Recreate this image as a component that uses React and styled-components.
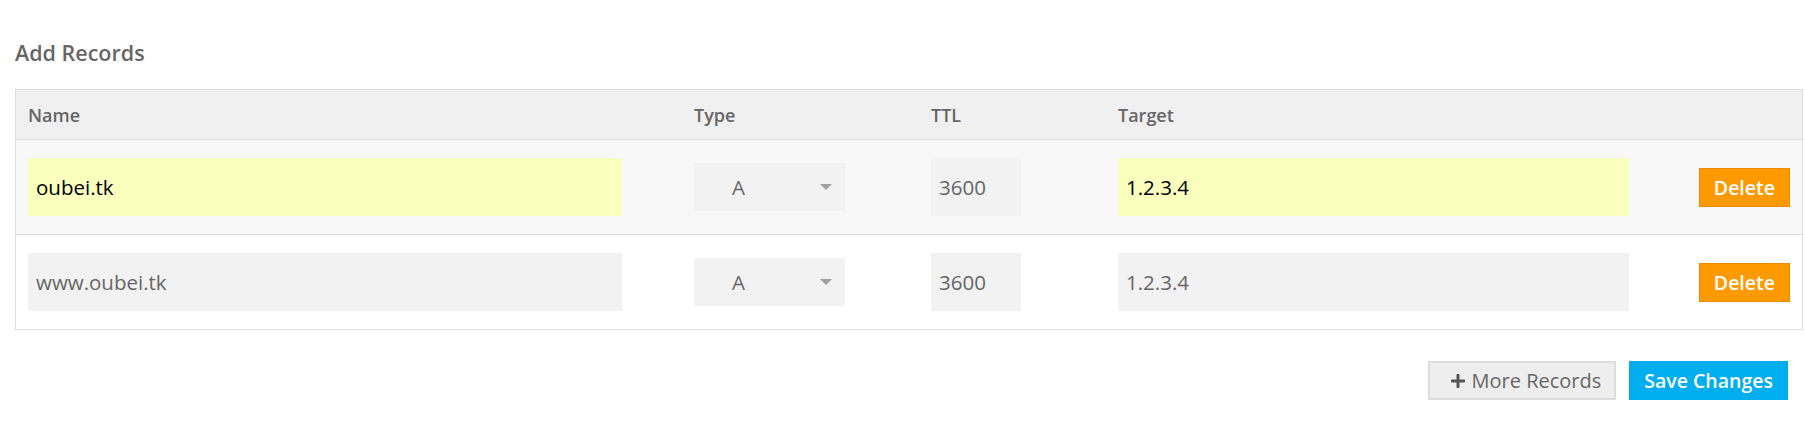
import React from 'react';
import styled, { createGlobalStyle } from 'styled-components';
import { FaPlus } from 'react-icons/fa';

const GlobalStyle = createGlobalStyle`
  body {
    margin: 0;
    background: #fff;
    font-family: "Open Sans", "Liberation Sans", sans-serif;
  }
`;

const Page = styled.div`
  padding: 38px 2px 40px 15px;
`;

const Heading = styled.h2`
  margin: 0 0 22px;
  font-size: 21.5px;
  line-height: 29px;
  font-weight: 600;
  color: #666;
`;

const Table = styled.div`
  border: 1px solid #ddd;
`;

const Row = styled.div`
  display: grid;
  grid-template-columns: 666px 237px 187px 1fr auto;
  align-items: center;
  background: ${({ $head, $alt }) => ($head ? '#f0f0f0' : $alt ? '#f8f8f8' : '#fff')};
  border-bottom: ${({ $last }) => ($last ? 'none' : '1px solid #ddd')};
  min-height: ${({ $head }) => ($head ? '49px' : '94px')};
`;

const HeadCell = styled.div`
  padding-left: 12px;
  font-size: 18px;
  font-weight: 600;
  color: #666;
`;

const Cell = styled.div`
  padding-left: 12px;
  display: flex;
  align-items: center;
  justify-content: ${({ $end }) => ($end ? 'flex-end' : 'flex-start')};
  padding-right: ${({ $end }) => ($end ? '12px' : '0')};
`;

const Field = styled.input`
  box-sizing: border-box;
  width: ${({ $w }) => $w}px;
  height: 58px;
  border: none;
  outline: none;
  padding: 0 8px;
  font-family: inherit;
  font-size: 20.5px;
  background: ${({ $filled }) => ($filled ? '#faffbd' : '#f2f2f2')};
  color: ${({ $filled }) => ($filled ? '#000' : '#666')};
`;

const SelectBox = styled.div`
  position: relative;
  box-sizing: border-box;
  width: 151px;
  height: 48px;
  background: #f2f2f2;
  display: flex;
  align-items: center;
  padding-left: 38px;
  font-size: 20.5px;
  color: #666;

  &::after {
    content: '';
    position: absolute;
    right: 13px;
    top: 21px;
    border-left: 6.5px solid transparent;
    border-right: 6.5px solid transparent;
    border-top: 6px solid #a0a0a0;
  }
`;

const DeleteButton = styled.button`
  height: 39px;
  padding: 0 14px;
  border: 1px solid #eb8c00;
  background: #ff9900;
  color: #fff;
  font-family: inherit;
  font-size: 19.5px;
  font-weight: 600;
  cursor: pointer;
`;

const Footer = styled.div`
  display: flex;
  justify-content: flex-end;
  gap: 13px;
  padding-right: 15px;
  margin-top: 31px;
`;

const MoreButton = styled.button`
  height: 39px;
  display: flex;
  align-items: center;
  gap: 6px;
  padding: 0 13px 0 20px;
  border: 2px solid #ddd;
  background: #eee;
  color: #666;
  font-family: inherit;
  font-size: 20px;
  cursor: pointer;

  svg {
    color: #555;
    width: 16px;
    height: 16px;
  }
`;

const SaveButton = styled.button`
  height: 39px;
  padding: 0 15px;
  border: none;
  background: #00aeef;
  color: #fff;
  font-family: inherit;
  font-size: 19.5px;
  font-weight: 600;
  cursor: pointer;
`;

const records = [
  { name: 'oubei.tk', type: 'A', ttl: '3600', target: '1.2.3.4', filled: true },
  { name: 'www.oubei.tk', type: 'A', ttl: '3600', target: '1.2.3.4', filled: false },
];

const App = () => (
  <Page>
    <GlobalStyle />
    <Heading>Add Records</Heading>
    <Table>
      <Row $head>
        <HeadCell>Name</HeadCell>
        <HeadCell>Type</HeadCell>
        <HeadCell>TTL</HeadCell>
        <HeadCell>Target</HeadCell>
        <HeadCell />
      </Row>
      {records.map((r, i) => (
        <Row key={r.name} $alt={i === 0} $last={i === records.length - 1}>
          <Cell><Field $w={594} $filled={r.filled} defaultValue={r.name} readOnly /></Cell>
          <Cell><SelectBox>{r.type}</SelectBox></Cell>
          <Cell><Field $w={90} defaultValue={r.ttl} readOnly /></Cell>
          <Cell><Field $w={511} $filled={r.filled} defaultValue={r.target} readOnly /></Cell>
          <Cell $end><DeleteButton>Delete</DeleteButton></Cell>
        </Row>
      ))}
    </Table>
    <Footer>
      <MoreButton><FaPlus />More Records</MoreButton>
      <SaveButton>Save Changes</SaveButton>
    </Footer>
  </Page>
);

export default App;
